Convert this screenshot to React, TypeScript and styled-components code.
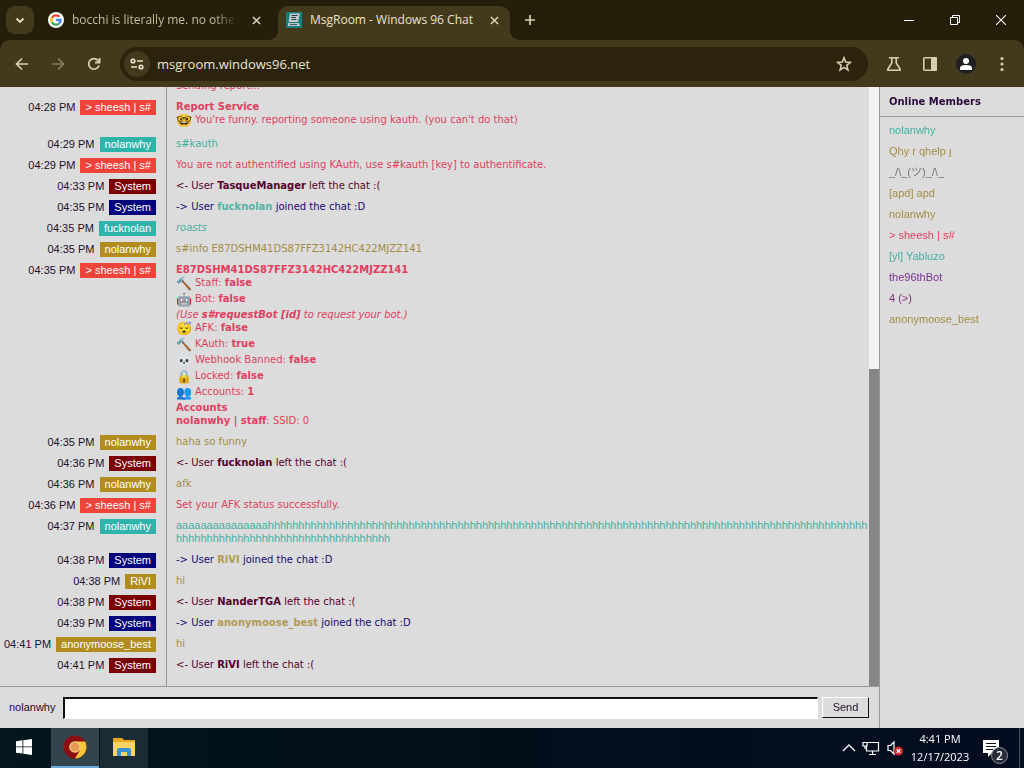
import React from "react";
import styled, { createGlobalStyle } from "styled-components";

const UI = `"Open Sans", "Noto Sans", sans-serif`;
const PAGE = `"Liberation Sans", "Noto Sans CJK JP", sans-serif`;
const CHAT = `"DejaVu Sans", sans-serif`;

const RED = "#e0405e";
const TEAL = "#45b0a2";
const GOLD = "#a58c45";
const NAVY = "#160a72";
const MAROON = "#56002c";

const GlobalStyle = createGlobalStyle`
  * { box-sizing: border-box; }
  body { margin: 0; background: #dcdcdc; }
  button { border: 0; padding: 0; background: none; color: inherit; font: inherit; }
`;

const Desktop = styled.div`
  display: flex;
  flex-direction: column;
  height: 100vh;
  font: 11px/13px ${PAGE};
  color: #1e0f28;
`;

/* ---------- browser chrome ---------- */

const TabStrip = styled.header`
  display: flex;
  align-items: flex-end;
  height: 40px;
  flex: none;
  background: #251e09;
  color: #e6dfc6;
  font: 500 12px/16px ${UI};
`;

const TabSearch = styled.button`
  display: grid;
  place-items: center;
  width: 28px;
  height: 28px;
  margin: 0 4px 6px 6px;
  border-radius: 9px;
  background: #433a1e;
`;

const Tab = styled.div<{ $active?: boolean }>`
  position: relative;
  display: flex;
  align-items: center;
  gap: 8px;
  width: ${(p) => (p.$active ? 232 : 240)}px;
  height: 34px;
  padding: ${(p) => (p.$active ? "0 8px 6px" : "0 14px 6px 10px")};
  border-radius: 10px 10px 0 0;
  background: ${(p) => (p.$active ? "#433a1e" : "transparent")};
  color: ${(p) => (p.$active ? "#e9e2c9" : "#c6bd9c")};
  &::before, &::after {
    content: ${(p) => (p.$active ? '""' : "none")};
    position: absolute;
    bottom: 0;
    width: 10px;
    height: 10px;
  }
  &::before { left: -10px; background: radial-gradient(circle at 0 0, #251e09 10px, #433a1e 10px); }
  &::after { right: -10px; background: radial-gradient(circle at 100% 0, #251e09 10px, #433a1e 10px); }
  svg { flex: none; }
`;

const TabTitle = styled.span<{ $fade?: boolean }>`
  flex: 1;
  overflow: hidden;
  white-space: nowrap;
  ${(p) => p.$fade && "mask-image: linear-gradient(90deg, #000 85%, transparent 98%);"}
`;

const TabButton = styled.button`
  display: grid;
  place-items: center;
  width: 16px;
  height: 16px;
`;

const NewTab = styled(TabButton)`
  margin: 0 0 12px 12px;
`;

const WindowControls = styled.div`
  display: flex;
  align-self: stretch;
  margin-left: auto;
  color: #fff;
`;

const WindowButton = styled.button`
  display: grid;
  place-items: center;
  width: 46px;
  height: 40px;
`;

const Backdrop = styled.div`
  flex: none;
  background: #251e09;
`;

const Toolbar = styled.nav`
  display: flex;
  align-items: center;
  height: 47px;
  padding: 0 4px;
  border-radius: 10px 10px 0 0;
  background: #433a1e;
  color: #d8cfae;
`;

const ToolButton = styled.button<{ $dim?: boolean }>`
  display: grid;
  place-items: center;
  width: 36px;
  height: 34px;
  opacity: ${(p) => (p.$dim ? 0.45 : 1)};
`;

const Omnibox = styled.div`
  display: flex;
  align-items: center;
  flex: 1;
  height: 34px;
  margin: 0 8px;
  padding: 0 6px 0 4px;
  border-radius: 17px;
  background: #2c230d;
`;

const SiteInfo = styled.button`
  display: grid;
  place-items: center;
  width: 26px;
  height: 26px;
  border-radius: 50%;
  background: #433a1e;
`;

const Address = styled.input`
  flex: 1;
  min-width: 0;
  margin-left: 7px;
  padding: 0;
  border: 0;
  outline: 0;
  background: none;
  color: #ece5cf;
  font: 13px/18px ${UI};
`;

/* ---------- chat page ---------- */

const Page = styled.main`
  display: flex;
  flex: 1;
  min-height: 0;
  background: #dcdcdc;
`;

const ChatPane = styled.section`
  display: flex;
  flex-direction: column;
  flex: 1;
  min-width: 0;
`;

const LogArea = styled.div`
  display: flex;
  flex: 1;
  min-height: 0;
  border-bottom: 1px solid #999;
`;

const Log = styled.div`
  display: flex;
  flex-direction: column;
  justify-content: flex-end;
  flex: 1;
  min-width: 0;
  overflow: hidden;
`;

const ScrollTrack = styled.div`
  display: flex;
  flex-direction: column;
  justify-content: flex-end;
  width: 10px;
  background: #f3f3f3;
`;

const ScrollThumb = styled.div`
  height: 53%;
  background: #868686;
`;

const Message = styled.article`
  display: grid;
  grid-template-columns: 167px 1fr;
  flex: none;
  &:last-child > * { padding-bottom: 13px; }
`;

const Author = styled.div`
  display: flex;
  align-items: flex-start;
  justify-content: flex-end;
  gap: 5px;
  padding: 3px 10px 3px 0;
  border-right: 1px solid #999;
  line-height: 15px;
  white-space: nowrap;
`;

const Nick = styled.span<{ $color: string }>`
  padding: 0 5px;
  background: ${(p) => p.$color};
  color: #fff;
`;

const Body = styled.div<{ $color: string; $plain?: boolean }>`
  padding: 3px 16px 5px 9px;
  color: ${(p) => p.$color};
  font: ${(p) => (p.$plain ? `11px/13px ${PAGE}` : `10px/13px ${CHAT}`)};
  white-space: nowrap;
`;

const Line = styled.div`
  height: 13px;
`;

const EmojiLine = styled.div`
  display: flex;
  align-items: flex-start;
  gap: 3px;
  height: 16px;
`;

const Emoji = styled.span`
  width: 16px;
  font: 13px/16px "Noto Color Emoji", sans-serif;
`;

const Name = styled.b<{ $color?: string }>`
  color: ${(p) => p.$color || "inherit"};
`;

const InputBar = styled.form`
  display: flex;
  align-items: center;
  height: 41px;
  padding: 0 10px 0 9px;
`;

const MessageBox = styled.input`
  flex: 1;
  min-width: 0;
  height: 22px;
  margin: 0 4px 0 8px;
  padding: 0 2px;
  border: 1px solid #fff;
  border-top: 2px solid #111;
  border-left: 2px solid #111;
  outline: 0;
  background: #fff;
  font: inherit;
`;

const SendButton = styled.button`
  width: 47px;
  height: 21px;
  border: 1px solid #111;
  border-top-color: #fff;
  border-left-color: #fff;
  background: #dcdcdc;
`;

const Sidebar = styled.aside`
  width: 145px;
  border-left: 1px solid #999;
`;

const SidebarTitle = styled.h2`
  margin: 0;
  padding: 8px 9px;
  border-bottom: 1px solid #999;
  font: bold 10px/13px ${CHAT};
  color: #2a0738;
`;

const MemberList = styled.ul`
  margin: 0;
  padding: 3px 9px;
  list-style: none;
`;

const Member = styled.li<{ $color: string }>`
  color: ${(p) => p.$color};
  line-height: 21px;
  white-space: nowrap;
`;

/* ---------- taskbar ---------- */

const Taskbar = styled.footer`
  display: flex;
  height: 40px;
  flex: none;
  background: linear-gradient(90deg, #03151d, #020f1b 50%, #040d20);
  color: #fff;
  font: 11px/18px ${UI};
`;

const TaskButton = styled.button<{ $state?: "active" | "open" }>`
  display: grid;
  place-items: center;
  width: 48px;
  height: 40px;
  background: ${(p) => (p.$state === "active" ? "#33454c" : p.$state === "open" ? "#1b2d34" : "none")};
  border-bottom: ${(p) => (p.$state === "active" ? "2px solid #6fa8dc" : "2px solid transparent")};
  margin-left: ${(p) => (p.$state === "active" ? 3 : p.$state === "open" ? 1 : 0)}px;
`;

const Tray = styled.div`
  display: flex;
  align-items: center;
  gap: 6px;
  margin-left: auto;
  border-right: 1px solid #4a5360;
  margin-right: 4px;
  padding-right: 12px;
`;

const Clock = styled.time`
  width: 60px;
  text-align: center;
  white-space: nowrap;
`;

const Notifications = styled.button`
  position: relative;
  width: 24px;
  height: 24px;
  margin-left: 7px;
`;

const Badge = styled.span`
  position: absolute;
  right: -1px;
  bottom: -4px;
  width: 17px;
  height: 17px;
  border: 1px solid #8a8f98;
  border-radius: 50%;
  background: #252c38;
  font: 600 12px/15px ${UI};
  text-align: center;
`;

/* ---------- icons ---------- */

const Cross = () => (
  <svg width="9" height="9" viewBox="0 0 10 10" stroke="#e0d8bd" strokeWidth="1.6"><path d="M1 1l8 8M9 1l-8 8" /></svg>
);

const GoogleIcon = () => (
  <svg width="16" height="16" viewBox="0 0 16 16" fill="none" strokeWidth="2.3">
    <circle cx="8" cy="8" r="8" fill="#fff" />
    <path d="M11.4 4.8A4.7 4.7 0 0 0 3.9 5.8" stroke="#ea4335" />
    <path d="M3.9 5.7a4.8 4.8 0 0 0 0 4.6" stroke="#fbbc05" />
    <path d="M3.9 10.2a4.7 4.7 0 0 0 7.2 1.3" stroke="#34a853" />
    <path d="M11 11.6A4.7 4.7 0 0 0 12.7 8H8" stroke="#4285f4" />
  </svg>
);

const ChatIcon = () => (
  <svg width="16" height="16" viewBox="0 0 16 16">
    <path fill="#128080" d="M0 0h16v16H0z" />
    <path fill="#c3c9c9" d="M4 1.500h10l-2 8.500H2.500z" />
    <path stroke="#24404a" fill="none" d="M5.500 3.500h6M5 5.500h5M5.500 7.500h5" />
    <path fill="#b9c4c4" d="M2 11h11l1 3H2z" />
    <path stroke="#456" fill="none" d="M4 12.500h7" />
  </svg>
);

const ChromeIcon = () => (
  <svg width="24" height="24" viewBox="0 0 24 24">
    <circle cx="12" cy="12" r="11.500" fill="#8c0f12" />
    <path fill="#f8c634" d="M12 6.500h10.100A11.500 11.500 0 0 1 12 23.500l5-8.500z" />
    <circle cx="12" cy="12" r="5.800" fill="#f5d08c" />
    <circle cx="12" cy="12" r="4.500" fill="#e59b52" />
  </svg>
);

const FolderIcon = () => (
  <svg width="22" height="18" viewBox="0 0 22 18">
    <path fill="#e9a820" d="M0 0h9l2 2h11v4H0z" />
    <path fill="#fbd466" d="M0 4h22v14H0z" />
    <path fill="#3b8fd0" d="M4 18v-6a2 2 0 0 1 2-2h10a2 2 0 0 1 2 2v6h-4v-4H8v4z" />
  </svg>
);

/* ---------- content ---------- */

const nicks: Record<string, string> = {
  bot: "#f04339",
  teal: "#2fb4ac",
  gold: "#b08d1c",
  left: "#7b0002",
  joined: "#02027c",
};

type Entry = { time?: string; nick?: string; tone?: string; color: string; plain?: boolean; body: React.ReactNode };

const left = (time: string, who: string): Entry => ({
  time, nick: "System", tone: "left", color: MAROON,
  body: <>&lt;- User <Name>{who}</Name> left the chat :(</>,
});

const joined = (time: string, who: string, color: string): Entry => ({
  time, nick: "System", tone: "joined", color: NAVY,
  body: <>-&gt; User <Name $color={color}>{who}</Name> joined the chat :D</>,
});

const bot = (time: string, body: React.ReactNode): Entry => ({ time, nick: "> sheesh | s#", tone: "bot", color: RED, body });

const Field = ({ icon, label, value }: { icon: string; label: string; value?: string }) => (
  <EmojiLine><Emoji>{icon}</Emoji><span>{label} {value && <b>{value}</b>}</span></EmojiLine>
);

const entries: Entry[] = [
  { color: RED, body: "Sending report..." },
  bot("04:28 PM", <>
    <Line><b>Report Service</b></Line>
    <Field icon="🤓" label="You're funny. reporting someone using kauth. (you can't do that)" />
  </>),
  { time: "04:29 PM", nick: "nolanwhy", tone: "teal", color: TEAL, body: "s#kauth" },
  bot("04:29 PM", "You are not authentified using KAuth, use s#kauth [key] to authentificate."),
  left("04:33 PM", "TasqueManager"),
  joined("04:35 PM", "fucknolan", "#55b3a4"),
  { time: "04:35 PM", nick: "fucknolan", tone: "teal", color: TEAL, body: <i>roasts</i> },
  { time: "04:35 PM", nick: "nolanwhy", tone: "gold", color: GOLD, body: "s#info E87DSHM41DS87FFZ3142HC422MJZZ141" },
  bot("04:35 PM", <>
    <Line><b>E87DSHM41DS87FFZ3142HC422MJZZ141</b></Line>
    <Field icon="🔨" label="Staff:" value="false" />
    <Field icon="🤖" label="Bot:" value="false" />
    <Line><i>(Use <b>s#requestBot [id]</b> to request your bot.)</i></Line>
    <Field icon="😴" label="AFK:" value="false" />
    <Field icon="🔨" label="KAuth:" value="true" />
    <Field icon="💀" label="Webhook Banned:" value="false" />
    <Field icon="🔒" label="Locked:" value="false" />
    <Field icon="👥" label="Accounts:" value="1" />
    <Line><b>Accounts</b></Line>
    <Line><b>nolanwhy | staff</b>: SSID: 0</Line>
  </>),
  { time: "04:35 PM", nick: "nolanwhy", tone: "gold", color: GOLD, body: "haha so funny" },
  left("04:36 PM", "fucknolan"),
  { time: "04:36 PM", nick: "nolanwhy", tone: "gold", color: GOLD, body: "afk" },
  bot("04:36 PM", "Set your AFK status successfully."),
  { time: "04:37 PM", nick: "nolanwhy", tone: "teal", color: TEAL, plain: true, body: <>
    <Line>{"a".repeat(15) + "h".repeat(98)}</Line>
    <Line>{"h".repeat(35)}</Line>
  </> },
  joined("04:38 PM", "RiVI", "#b39a55"),
  { time: "04:38 PM", nick: "RiVI", tone: "gold", color: GOLD, body: "hi" },
  left("04:38 PM", "NanderTGA"),
  joined("04:39 PM", "anonymoose_best", "#b39a55"),
  { time: "04:41 PM", nick: "anonymoose_best", tone: "gold", color: GOLD, body: "hi" },
  left("04:41 PM", "RiVI"),
];

const members: [string, string][] = [
  ["nolanwhy", TEAL],
  ["Qhy r qhelp ȷ", GOLD],
  ["_/\\_(ツ)_/\\_", "#777"],
  ["[apd] apd", GOLD],
  ["nolanwhy", GOLD],
  ["> sheesh | s#", RED],
  ["[yl] Yabluzo", TEAL],
  ["the96thBot", "#7a2f98"],
  ["4 (>)", "#7a2f78"],
  ["anonymoose_best", GOLD],
];

export default function App() {
  return (
    <Desktop>
      <GlobalStyle />
      <TabStrip>
        <TabSearch aria-label="Search tabs">
          <svg width="10" height="7" viewBox="0 0 10 7" fill="none" stroke="#e8e0c5" strokeWidth="1.8"><path d="M1.500 1.500L5 5l3.500-3.500" /></svg>
        </TabSearch>
        <Tab>
          <GoogleIcon />
          <TabTitle $fade>bocchi is literally me. no other</TabTitle>
          <TabButton aria-label="Close tab"><Cross /></TabButton>
        </Tab>
        <Tab $active>
          <ChatIcon />
          <TabTitle>MsgRoom - Windows 96 Chat</TabTitle>
          <TabButton aria-label="Close tab"><Cross /></TabButton>
        </Tab>
        <NewTab aria-label="New tab">
          <svg width="12" height="12" viewBox="0 0 12 12" stroke="#d8cfae" strokeWidth="1.700"><path d="M6 1v10M1 6h10" /></svg>
        </NewTab>
        <WindowControls>
          <WindowButton aria-label="Minimize"><svg width="10" height="10" viewBox="0 0 10 10" stroke="#fff"><path d="M0 5.500h10" /></svg></WindowButton>
          <WindowButton aria-label="Restore"><svg width="10" height="10" viewBox="0 0 10 10" fill="none" stroke="#fff"><path d="M.5 2.500h7v7h-7zM2.500 2.500v-2h7v7h-2" /></svg></WindowButton>
          <WindowButton aria-label="Close"><svg width="10" height="10" viewBox="0 0 10 10" stroke="#fff" strokeWidth="1.100"><path d="M0 0l10 10M10 0L0 10" /></svg></WindowButton>
        </WindowControls>
      </TabStrip>
      <Backdrop>
        <Toolbar>
          <ToolButton aria-label="Back"><svg width="14" height="14" viewBox="0 0 14 14" fill="none" stroke="currentColor" strokeWidth="1.700"><path d="M13 7H2M7 1.500L1.500 7 7 12.500" /></svg></ToolButton>
          <ToolButton aria-label="Forward" $dim><svg width="14" height="14" viewBox="0 0 14 14" fill="none" stroke="currentColor" strokeWidth="1.700"><path d="M1 7h11M7 1.500L12.500 7 7 12.500" /></svg></ToolButton>
          <ToolButton aria-label="Reload"><svg width="14" height="14" viewBox="0 0 14 14" fill="none" stroke="currentColor" strokeWidth="1.800"><path d="M12 8.500A5.300 5.300 0 1 1 11 3.400L12.500 5M12.600 1v4.500H8" /></svg></ToolButton>
          <Omnibox>
            <SiteInfo aria-label="Site information">
              <svg width="14" height="12" viewBox="0 0 14 12" fill="none" stroke="#ece5cf" strokeWidth="1.600"><circle cx="3" cy="3" r="1.800" /><path d="M7 3h6M1 9h6" /><circle cx="11" cy="9" r="1.800" /></svg>
            </SiteInfo>
            <Address aria-label="Address" defaultValue="msgroom.windows96.net" />
            <ToolButton aria-label="Bookmark"><svg width="16" height="16" viewBox="0 0 16 16" fill="none" stroke="currentColor" strokeWidth="1.600"><path d="M8 1.800l1.700 4.300 4.600.3-3.500 3 1.100 4.500L8 11.400l-3.900 2.500 1.100-4.500-3.500-3 4.600-.3z" /></svg></ToolButton>
          </Omnibox>
          <ToolButton aria-label="Experiments"><svg width="16" height="16" viewBox="0 0 16 16" fill="none" stroke="currentColor" strokeWidth="1.600"><path d="M3 1.800h10M5.800 2v5L1.800 13.200q-.4 1 .7 1h11q1.100 0 .7-1L10.200 7V2" /></svg></ToolButton>
          <ToolButton aria-label="Side panel"><svg width="16" height="16" viewBox="0 0 16 16"><rect x="1.800" y="1.800" width="12.400" height="12.400" rx="1" fill="none" stroke="currentColor" strokeWidth="1.600" /><path fill="currentColor" d="M9 1h5a1 1 0 0 1 1 1v12a1 1 0 0 1-1 1H9z" /></svg></ToolButton>
          <ToolButton aria-label="Profile"><svg width="20" height="20" viewBox="0 0 20 20"><circle cx="10" cy="10" r="10" fill="#1f2023" /><circle cx="10" cy="7" r="3" fill="#fff" /><path fill="#fff" d="M4 16v-2q0-3 6-3t6 3v2z" /></svg></ToolButton>
          <ToolButton aria-label="Menu"><svg width="4" height="16" viewBox="0 0 4 16" fill="currentColor"><circle cx="2" cy="2.500" r="1.600" /><circle cx="2" cy="8" r="1.600" /><circle cx="2" cy="13.500" r="1.600" /></svg></ToolButton>
        </Toolbar>
      </Backdrop>

      <Page>
        <ChatPane>
          <LogArea>
            <Log>
              {entries.map((e, i) => (
                <Message key={i}>
                  <Author>
                    {e.time && <time>{e.time}</time>}
                    {e.nick && <Nick $color={nicks[e.tone || "gold"]}>{e.nick}</Nick>}
                  </Author>
                  <Body $color={e.color} $plain={e.plain}>{e.body}</Body>
                </Message>
              ))}
            </Log>
            <ScrollTrack><ScrollThumb /></ScrollTrack>
          </LogArea>
          <InputBar onSubmit={(ev) => ev.preventDefault()}>
            <label htmlFor="message">nolanwhy</label>
            <MessageBox id="message" autoFocus />
            <SendButton>Send</SendButton>
          </InputBar>
        </ChatPane>
        <Sidebar>
          <SidebarTitle>Online Members</SidebarTitle>
          <MemberList>
            {members.map(([name, color], i) => <Member key={i} $color={color}>{name}</Member>)}
          </MemberList>
        </Sidebar>
      </Page>

      <Taskbar>
        <TaskButton aria-label="Start"><svg width="16" height="16" viewBox="0 0 16 16" fill="#fff"><path d="M0 2.200l6.500-.9v6.200H0zM7.300 1.200L16 0v7.500H7.300zM0 8.300h6.500v6.300L0 13.700zM7.300 8.300H16V16l-8.700-1.200z" /></svg></TaskButton>
        <TaskButton $state="active" aria-label="Chrome"><ChromeIcon /></TaskButton>
        <TaskButton $state="open" aria-label="File Explorer"><FolderIcon /></TaskButton>
        <Tray>
          <svg width="14" height="8" viewBox="0 0 14 8" fill="none" stroke="#fff" strokeWidth="1.300"><path d="M1 7l6-6 6 6" /></svg>
          <svg width="18" height="16" viewBox="0 0 18 16" fill="none" stroke="#fff" strokeWidth="1.200"><path d="M5 2.500h11.500v8.500H4.500V6M10.500 11v3M7 14.500h7M1 2.500h4v3.500H1zM3 6v3" /></svg>
          <svg width="18" height="16" viewBox="0 0 18 16"><path fill="none" stroke="#fff" strokeWidth="1.200" d="M2 5.500h2.500L8 2v12l-3.500-3.500H2z" /><circle cx="12.500" cy="11" r="4.500" fill="#d0262e" /><path stroke="#fff" strokeWidth="1.300" d="M10.700 9.200l3.600 3.600M14.300 9.200l-3.600 3.600" /></svg>
          <Clock>4:41 PM<br />12/17/2023</Clock>
          <Notifications aria-label="Notifications">
            <svg width="24" height="24" viewBox="0 0 24 24"><path fill="#fff" d="M0 4h16v13H9l-4 4v-4H0z" /><path stroke="#0a1222" d="M3 7.500h10M3 10.500h10M3 13.500h7" /></svg>
            <Badge>2</Badge>
          </Notifications>
        </Tray>
      </Taskbar>
    </Desktop>
  );
}
